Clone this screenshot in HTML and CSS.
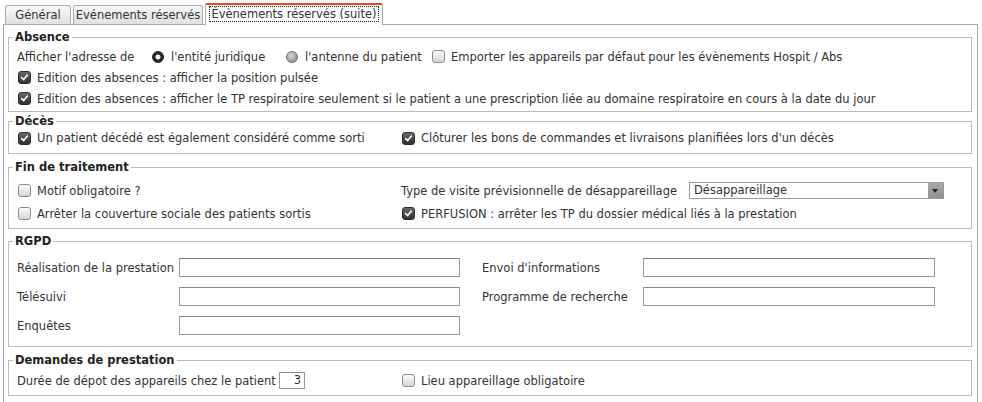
FILE: index.html
```html
<!DOCTYPE html>
<html lang="fr">
  <head>
    <meta charset="utf-8" />
    <title>Paramètres - Évènements réservés (suite)</title>
    <link rel="stylesheet" href="styles.css">
  </head>
  <body>
    <div class="tabs">
      <span class="tab general">Général</span>
      <span class="tab reserves">Evénements réservés</span>
      <span class="tab active"><span class="focus">Évènements réservés (suite)</span></span>
    </div>
    <div class="panel">
      <fieldset class="group absence">
        <legend>Absence</legend>
        <div class="row address">
          <span>Afficher l'adresse de</span>
          <label class="opt"><span class="radio on"></span>l'entité juridique</label>
          <label class="opt"><span class="radio"></span>l'antenne du patient</label>
          <label class="opt"><span class="cb"></span>Emporter les appareils par défaut pour les évènements Hospit / Abs</label>
        </div>
        <div class="row">
          <label class="opt"><span class="cb on"><svg viewBox="0 0 13 13"><path d="M3.2 6.6l2.3 2.4 4.4-5.4" /></svg></span>Edition des absences : afficher la position pulsée</label>
        </div>
        <div class="row">
          <label class="opt"><span class="cb on"><svg viewBox="0 0 13 13"><path d="M3.2 6.6l2.3 2.4 4.4-5.4" /></svg></span>Edition des absences : afficher le TP respiratoire seulement si le patient a une prescription liée au domaine respiratoire en cours à la date du jour</label>
        </div>
      </fieldset>

      <fieldset class="group deces">
        <legend>Décès</legend>
        <div class="row cols">
          <label class="opt"><span class="cb on"><svg viewBox="0 0 13 13"><path d="M3.2 6.6l2.3 2.4 4.4-5.4" /></svg></span>Un patient décédé est également considéré comme sorti</label>
          <label class="opt"><span class="cb on"><svg viewBox="0 0 13 13"><path d="M3.2 6.6l2.3 2.4 4.4-5.4" /></svg></span>Clôturer les bons de commandes et livraisons planifiées lors d'un décès</label>
        </div>
      </fieldset>

      <fieldset class="group fin">
        <legend>Fin de traitement</legend>
        <div class="row cols tall">
          <label class="opt"><span class="cb"></span>Motif obligatoire ?</label>
          <div class="field">
            <span class="field-label">Type de visite prévisionnelle de désappareillage</span>
            <div class="select">
              <span class="select-value">Désappareillage</span>
              <span class="select-arrow"></span>
            </div>
          </div>
        </div>
        <div class="row cols tall">
          <label class="opt"><span class="cb"></span>Arrêter la couverture sociale des patients sortis</label>
          <label class="opt"><span class="cb on"><svg viewBox="0 0 13 13"><path d="M3.2 6.6l2.3 2.4 4.4-5.4" /></svg></span>PERFUSION : arrêter les TP du dossier médical liés à la prestation</label>
        </div>
      </fieldset>

      <fieldset class="group rgpd">
        <legend>RGPD</legend>
        <div class="rgpd-grid">
          <span>Réalisation de la prestation</span>
          <span class="input"></span>
          <span></span>
          <span>Envoi d'informations</span>
          <span class="input"></span>

          <span>Télésuivi</span>
          <span class="input"></span>
          <span></span>
          <span>Programme de recherche</span>
          <span class="input"></span>

          <span>Enquêtes</span>
          <span class="input"></span>
        </div>
      </fieldset>

      <fieldset class="group demandes">
        <legend>Demandes de prestation</legend>
        <div class="row cols short">
          <div class="field">
            <span class="duree-label">Durée de dépot des appareils chez le patient</span>
            <span class="input small">3</span>
          </div>
          <label class="opt"><span class="cb"></span>Lieu appareillage obligatoire</label>
        </div>
      </fieldset>
    </div>
  </body>
</html>
```

FILE: styles.css
```css
html,
body {
  margin: 0;
  padding: 0;
}

body {
  background-color: white;
  color: #333;
  font-family: "DejaVu Sans", Verdana, sans-serif;
  font-size: 11.5px;
  overflow: hidden;
}

/* tabs */

.tabs {
  display: flex;
  align-items: flex-end;
  gap: 2px;
  height: 24px;
  padding-left: 5px;
}

.tab {
  box-sizing: border-box;
  height: 19px;
  line-height: 18px;
  border: 1px solid #aaa;
  border-bottom: none;
  border-radius: 3px 3px 0 0;
  background: linear-gradient(#f8f8f8, #e0e0e0);
  font-size: 11.5px;
  text-align: center;
  white-space: nowrap;
}

.tab.general {
  width: 66px;
}

.tab.reserves {
  width: 130px;
}

.tab.active {
  position: relative;
  z-index: 1;
  width: 178px;
  height: 22px;
  line-height: 19px;
  margin-bottom: -1px;
  border-top: 2px solid #e4461f;
  border-radius: 2px 2px 0 0;
  background: white;
}

.focus {
  outline: 1px dotted #222;
  padding: 0 1px;
}

/* panel and groups */

.panel {
  width: 964px;
  margin-left: 3px;
  padding: 0 5px 12px 4px;
  border: 1px solid #aaa;
}

.group {
  margin: 0;
  padding: 0 8px;
  min-width: 0;
  border: 1px solid #bcbcbc;
}

.group legend {
  margin-left: -4px;
  padding: 0 2px;
  line-height: 14px;
  font-weight: bold;
  color: #222;
}

.absence {
  margin-top: 5px;
  padding-top: 2px;
  padding-bottom: 2px;
}

.deces {
  margin-top: 2px;
  padding-bottom: 5px;
}

.fin {
  margin-top: 6px;
  padding-top: 5px;
  padding-bottom: 3px;
}

.rgpd {
  margin-top: 5px;
  padding-top: 10px;
  padding-bottom: 11px;
}

.demandes {
  margin-top: 6px;
  padding-top: 5px;
  padding-bottom: 6px;
}

.row {
  display: flex;
  align-items: center;
  height: 21px;
  white-space: nowrap;
}

.deces .row {
  height: 20px;
}

.row.tall {
  height: 23px;
}

.row.short {
  height: 17px;
}

.row.cols {
  display: grid;
  grid-template-columns: 384px auto;
  align-items: center;
}

.address {
  display: grid;
  grid-template-columns: 135px 134px 145px auto;
}

/* checkboxes and radios */

.opt {
  display: flex;
  align-items: center;
  gap: 6px;
}

.cb {
  box-sizing: border-box;
  display: inline-flex;
  flex: none;
  width: 13px;
  height: 13px;
  margin-left: 1px;
  border: 1px solid #8c8c8c;
  border-radius: 3px;
  background: linear-gradient(#fdfdfd, #d4d4d4);
}

.cb.on {
  border-color: #2e2e2e;
  background: linear-gradient(#6a6a6a, #303030);
}

.cb svg {
  width: 11px;
  height: 11px;
}

.cb path {
  fill: none;
  stroke: white;
  stroke-width: 1.9;
  stroke-linecap: round;
  stroke-linejoin: round;
}

.radio {
  box-sizing: border-box;
  flex: none;
  width: 12px;
  height: 12px;
  margin-right: 1px;
  border: 1px solid #6f6f6f;
  border-radius: 50%;
  background: radial-gradient(circle at 40% 35%, #d6d6d6, #808080);
}

.radio.on {
  border-color: #1e1e1e;
  background: radial-gradient(circle, #f2f2f2 0 2.2px, #2a2a2a 2.8px);
}

/* fields */

.field {
  display: flex;
  align-items: center;
}

.field-label {
  width: 288px;
}

.select {
  box-sizing: border-box;
  display: flex;
  width: 255px;
  height: 17px;
  border: 1px solid #9a9a9a;
  background: white;
}

.select-value {
  flex: 1;
  padding-left: 4px;
  line-height: 15px;
}

.select-arrow {
  position: relative;
  width: 15px;
  background: linear-gradient(#a8a8a8, #929292);
}

.select-arrow::after {
  content: "";
  position: absolute;
  left: 4px;
  top: 6px;
  border-left: 3.5px solid transparent;
  border-right: 3.5px solid transparent;
  border-top: 4px solid #222;
}

.rgpd-grid {
  display: grid;
  grid-template-columns: 162px 281px 22px 161px 292px;
  grid-auto-rows: 19px;
  row-gap: 10px;
  align-items: center;
  white-space: nowrap;
}

.input {
  box-sizing: border-box;
  display: block;
  height: 19px;
  border: 1px solid #999;
  border-top-color: #8a8a8a;
  background: white;
}

.duree-label {
  width: 262px;
}

.input.small {
  width: 26px;
  height: 17px;
  padding-right: 3px;
  line-height: 15px;
  text-align: right;
}
```
